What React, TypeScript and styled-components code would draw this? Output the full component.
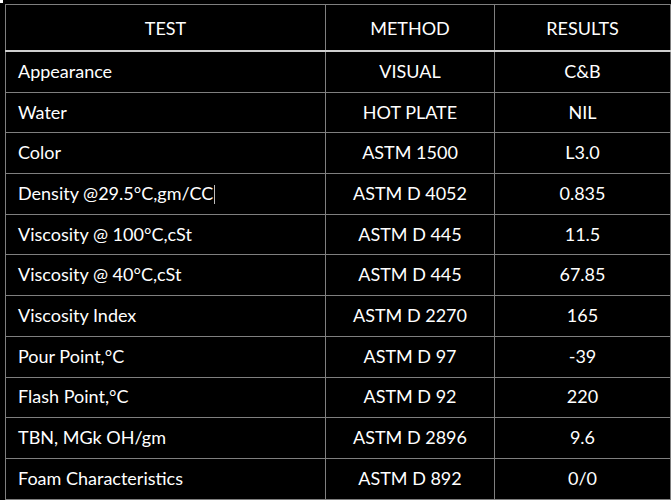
import React from "react";
import styled, { createGlobalStyle } from "styled-components";

const rows: [string, string, string][] = [
  ["Appearance", "VISUAL", "C&B"],
  ["Water", "HOT PLATE", "NIL"],
  ["Color", "ASTM 1500", "L3.0"],
  ["Density @29.5°C,gm/CC", "ASTM D 4052", "0.835"],
  ["Viscosity @ 100°C,cSt", "ASTM D 445", "11.5"],
  ["Viscosity @ 40°C,cSt", "ASTM D 445", "67.85"],
  ["Viscosity Index", "ASTM D 2270", "165"],
  ["Pour Point,°C", "ASTM D 97", "-39"],
  ["Flash Point,°C", "ASTM D 92", "220"],
  ["TBN, MGk OH/gm", "ASTM D 2896", "9.6"],
  ["Foam Characteristics", "ASTM D 892", "0/0"],
];

const GlobalStyle = createGlobalStyle`
  html, body {
    margin: 0;
    background: #000;
  }
  body {
    font-family: Lato, "Open Sans", sans-serif;
    color: #fff;
  }
`;

const Page = styled("div")`
  padding: 4px 2px 0 5px;
  position: relative;
`;

const Corner = styled("div")`
  position: absolute;
  top: 0;
  left: 0;
  width: 3px;
  height: 3px;
  background: #fff;
`;

const Table = styled("table")`
  width: 665px;
  border-collapse: collapse;
  table-layout: fixed;
`;

const HeadCell = styled("th")`
  height: 45px;
  padding: 0;
  font-weight: 400;
  font-size: 18px;
  text-align: center;
  border: 1px solid #7f7f7f;
  border-bottom: 2px solid #cfcfcf;
`;

const Cell = styled("td")<{ $left?: boolean }>`
  height: 37.7px;
  padding: 0 0 2px ${(p) => (p.$left ? "12px" : "0")};
  font-size: 18px;
  text-align: ${(p) => (p.$left ? "left" : "center")};
  border: 1px solid #7f7f7f;
  white-space: nowrap;
`;

const Caret = styled("span")`
  display: inline-block;
  width: 1px;
  height: 19px;
  margin-left: 1px;
  vertical-align: -4px;
  background: #bbb;
`;

export default function App() {
  return (
    <>
      <GlobalStyle />
      <Page>
        <Corner />
        <Table>
          <colgroup>
            <col style={{ width: 320 }} />
            <col style={{ width: 169 }} />
            <col style={{ width: 176 }} />
          </colgroup>
          <thead>
            <tr>
              <HeadCell>TEST</HeadCell>
              <HeadCell>METHOD</HeadCell>
              <HeadCell>RESULTS</HeadCell>
            </tr>
          </thead>
          <tbody>
            {rows.map(([test, method, result], i) => (
              <tr key={i}>
                <Cell $left>
                  {test}
                  {i === 3 && <Caret />}
                </Cell>
                <Cell>{method}</Cell>
                <Cell>{result}</Cell>
              </tr>
            ))}
          </tbody>
        </Table>
      </Page>
    </>
  );
}
